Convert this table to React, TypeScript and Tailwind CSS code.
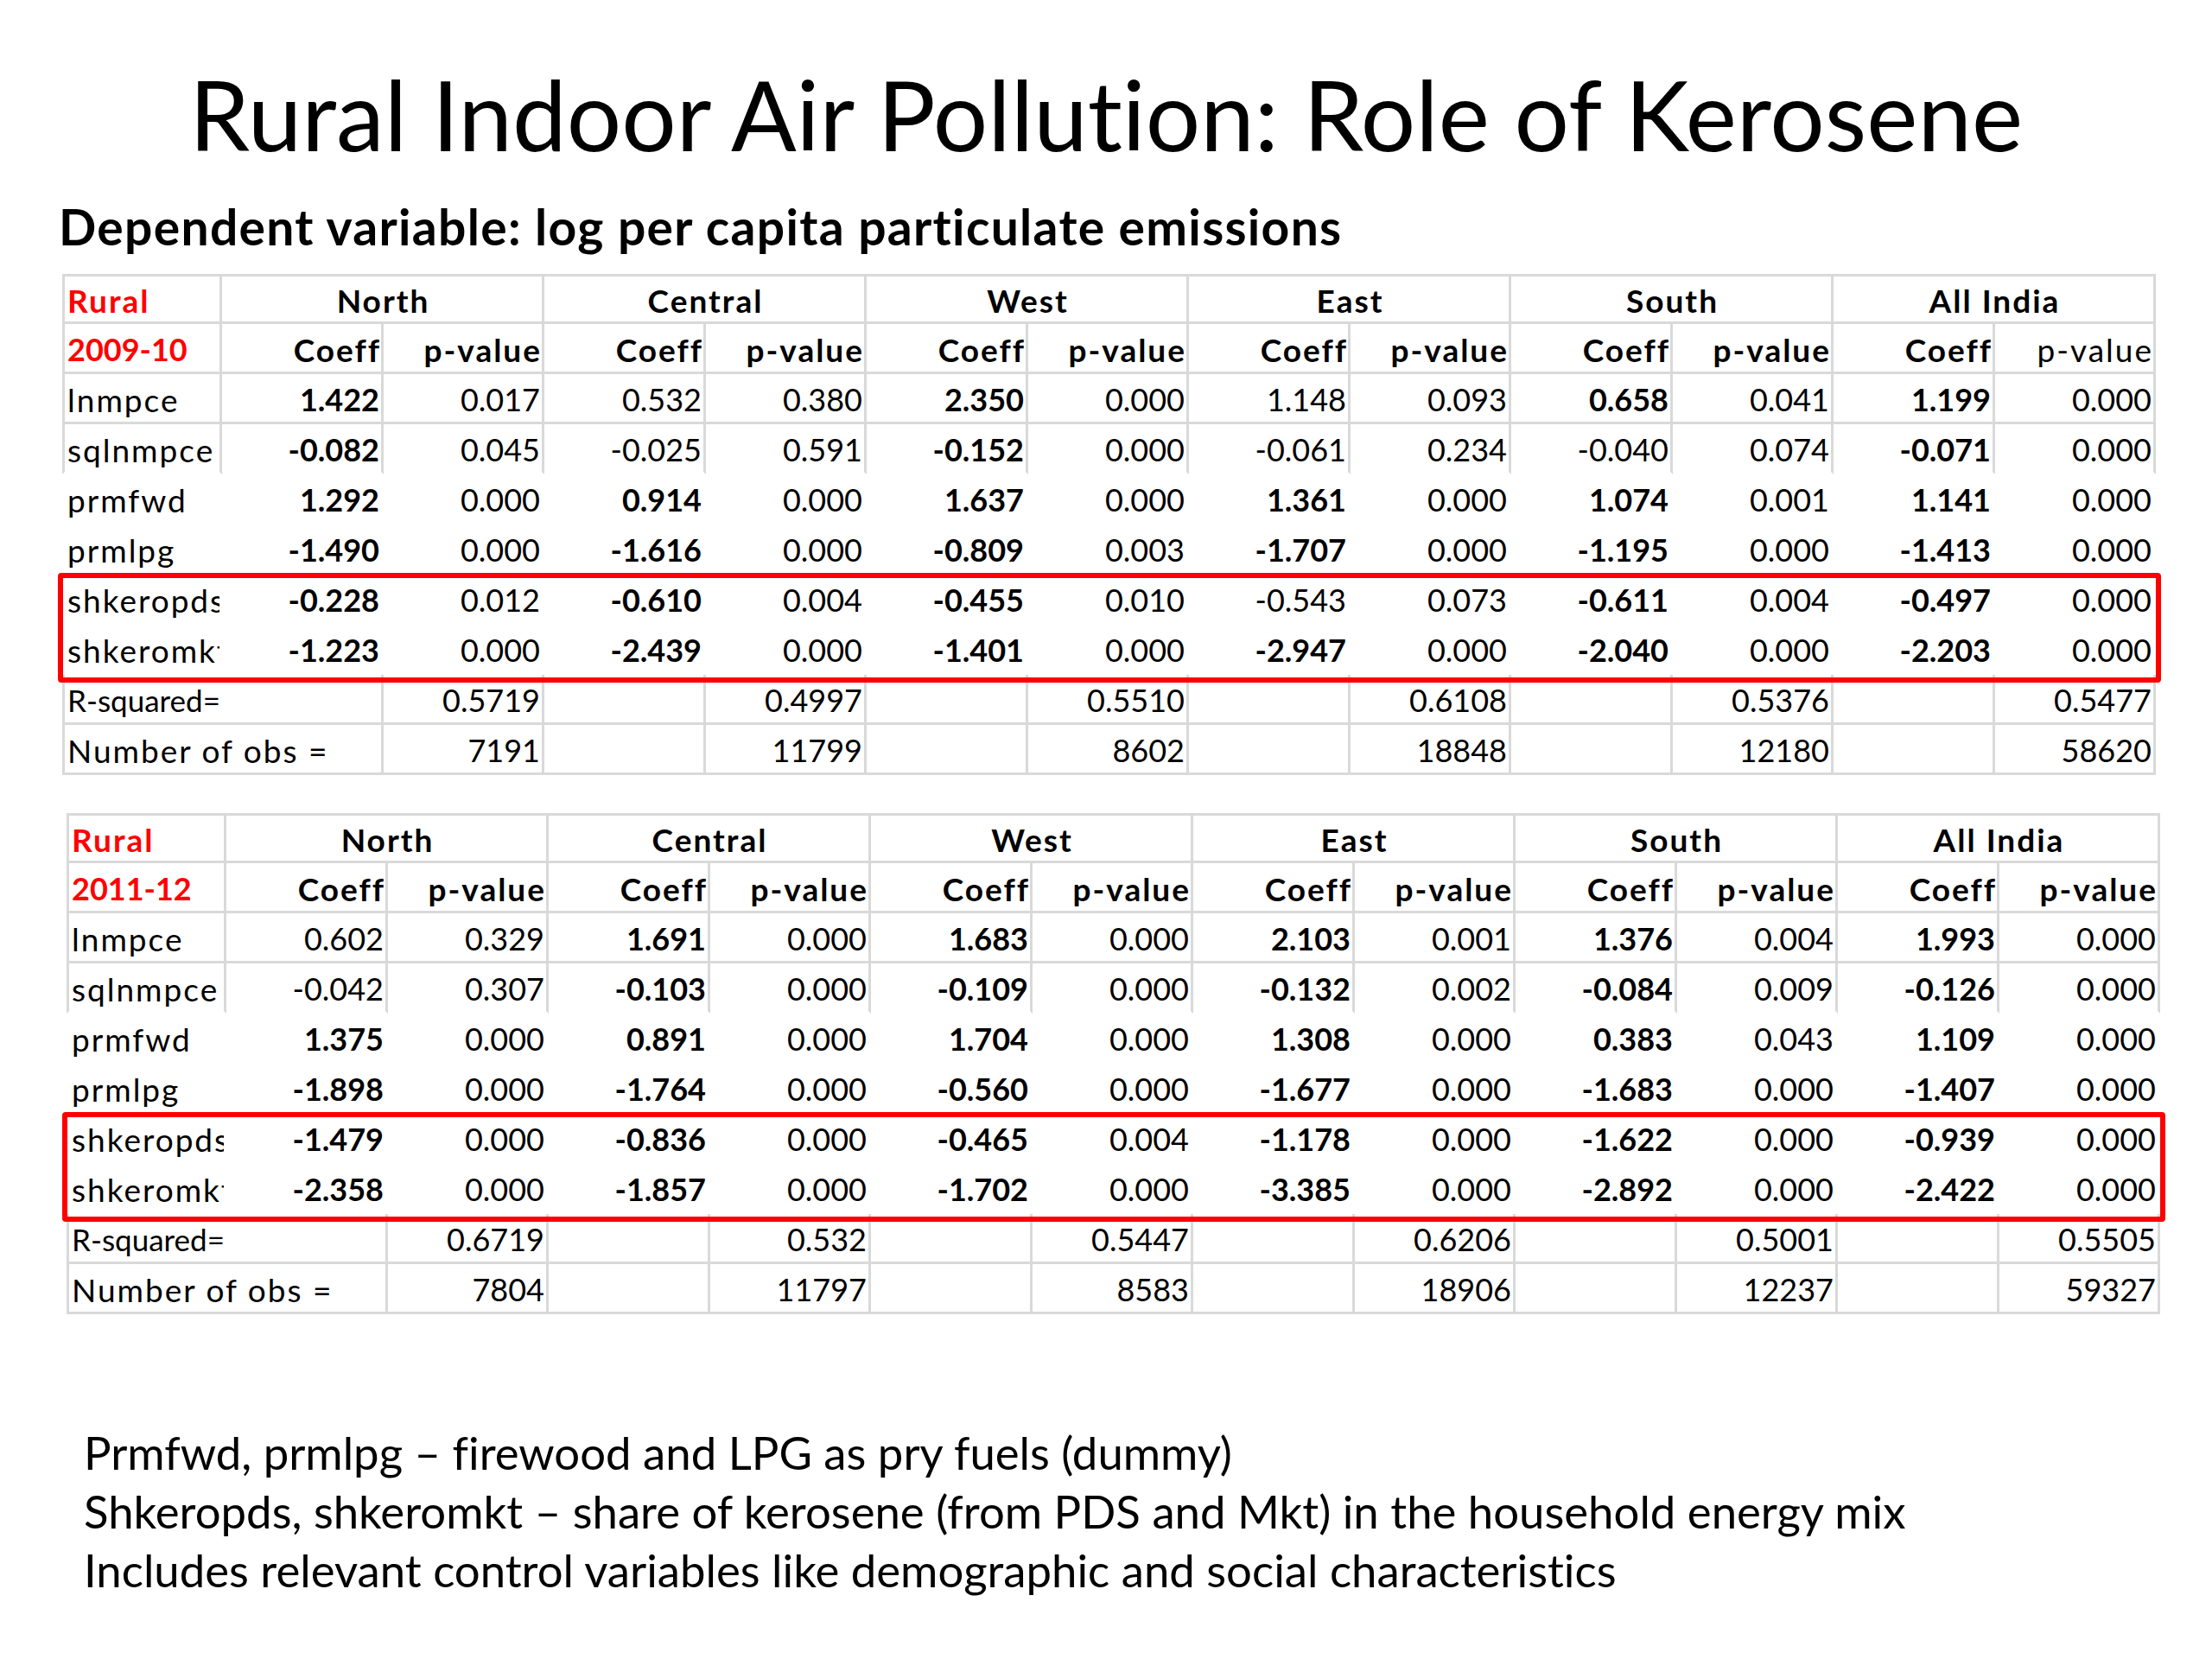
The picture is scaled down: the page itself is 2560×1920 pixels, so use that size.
import React from "react";

type RegionRow = { label: string; values: string[] };

type TableData = {
  year: string;
  rows: RegionRow[];
  rsq: string[];
  obs: string[];
  lastHeaderPlain?: boolean;
};

const regions = ["North", "Central", "West", "East", "South", "All India"];

// "*" prefix marks a bold (significant) coefficient
const table1: TableData = {
  year: "2009-10",
  lastHeaderPlain: true,
  rows: [
    { label: "lnmpce", values: ["*1.422", "0.017", "0.532", "0.380", "*2.350", "0.000", "1.148", "0.093", "*0.658", "0.041", "*1.199", "0.000"] },
    { label: "sqlnmpce", values: ["*-0.082", "0.045", "-0.025", "0.591", "*-0.152", "0.000", "-0.061", "0.234", "-0.040", "0.074", "*-0.071", "0.000"] },
    { label: "prmfwd", values: ["*1.292", "0.000", "*0.914", "0.000", "*1.637", "0.000", "*1.361", "0.000", "*1.074", "0.001", "*1.141", "0.000"] },
    { label: "prmlpg", values: ["*-1.490", "0.000", "*-1.616", "0.000", "*-0.809", "0.003", "*-1.707", "0.000", "*-1.195", "0.000", "*-1.413", "0.000"] },
    { label: "shkeropds", values: ["*-0.228", "0.012", "*-0.610", "0.004", "*-0.455", "0.010", "-0.543", "0.073", "*-0.611", "0.004", "*-0.497", "0.000"] },
    { label: "shkeromkt", values: ["*-1.223", "0.000", "*-2.439", "0.000", "*-1.401", "0.000", "*-2.947", "0.000", "*-2.040", "0.000", "*-2.203", "0.000"] },
  ],
  rsq: ["0.5719", "0.4997", "0.5510", "0.6108", "0.5376", "0.5477"],
  obs: ["7191", "11799", "8602", "18848", "12180", "58620"],
};

const table2: TableData = {
  year: "2011-12",
  rows: [
    { label: "lnmpce", values: ["0.602", "0.329", "*1.691", "0.000", "*1.683", "0.000", "*2.103", "0.001", "*1.376", "0.004", "*1.993", "0.000"] },
    { label: "sqlnmpce", values: ["-0.042", "0.307", "*-0.103", "0.000", "*-0.109", "0.000", "*-0.132", "0.002", "*-0.084", "0.009", "*-0.126", "0.000"] },
    { label: "prmfwd", values: ["*1.375", "0.000", "*0.891", "0.000", "*1.704", "0.000", "*1.308", "0.000", "*0.383", "0.043", "*1.109", "0.000"] },
    { label: "prmlpg", values: ["*-1.898", "0.000", "*-1.764", "0.000", "*-0.560", "0.000", "*-1.677", "0.000", "*-1.683", "0.000", "*-1.407", "0.000"] },
    { label: "shkeropds", values: ["*-1.479", "0.000", "*-0.836", "0.000", "*-0.465", "0.004", "*-1.178", "0.000", "*-1.622", "0.000", "*-0.939", "0.000"] },
    { label: "shkeromkt", values: ["*-2.358", "0.000", "*-1.857", "0.000", "*-1.702", "0.000", "*-3.385", "0.000", "*-2.892", "0.000", "*-2.422", "0.000"] },
  ],
  rsq: ["0.6719", "0.532", "0.5447", "0.6206", "0.5001", "0.5505"],
  obs: ["7804", "11797", "8583", "18906", "12237", "59327"],
};

const cellBase = "flex h-[58px] items-center overflow-hidden whitespace-nowrap pt-[3px] leading-none";
const word = "pl-[3px] pr-0 text-[37px] tracking-[2px]";
const num = "pl-[3px] pr-[2px] text-[36px]";
const lined = "border-r-[3px] border-b-[3px] border-[#d9d9d9]";
const bare = "border-r-[3px] border-b-[3px] border-transparent";

function RegressionTable({ data }: { data: TableData }) {
  return (
    <div className="relative w-fit">
      <div className="grid grid-cols-[185px_repeat(6,187px_186px)]">
        {/* region header */}
        <div className={`${cellBase} ${word} ${lined} border-t-[3px] border-l-[3px] font-bold text-[#ff0000]`}>Rural</div>
        {regions.map((r) => (
          <div key={r} className={`${cellBase} ${word} ${lined} col-span-2 justify-center border-t-[3px] font-bold`}>
            {r}
          </div>
        ))}

        {/* coeff / p-value header */}
        <div className={`${cellBase} ${num} ${lined} border-l-[3px] font-bold text-[#ff0000]`}>{data.year}</div>
        {regions.map((r, i) => (
          <React.Fragment key={r}>
            <div className={`${cellBase} ${word} ${lined} justify-end font-bold`}>Coeff</div>
            <div
              className={`${cellBase} ${word} ${lined} justify-end ${
                data.lastHeaderPlain && i === regions.length - 1 ? "font-normal" : "font-bold"
              }`}
            >
              p-value
            </div>
          </React.Fragment>
        ))}

        {data.rows.map((row, ri) => {
          // only the first two variable rows keep their grid lines
          const grid = ri < 2 ? lined : bare;
          const bottom = ri === 1 ? "border-b-transparent" : "";
          return (
            <React.Fragment key={row.label}>
              <div className={`${cellBase} ${word} ${grid} border-l-[3px] ${ri < 2 ? "" : "border-l-transparent"} ${bottom}`}>
                {row.label}
              </div>
              {row.values.map((v, vi) => {
                const bold = v.startsWith("*");
                return (
                  <div key={vi} className={`${cellBase} ${num} ${grid} ${bottom} justify-end ${bold ? "font-bold" : ""}`}>
                    {bold ? v.slice(1) : v}
                  </div>
                );
              })}
            </React.Fragment>
          );
        })}

        {/* summary rows */}
        <div className={`${cellBase} ${lined} col-span-2 border-l-[3px] pl-[3px] text-[35px]`}>R-squared=</div>
        {data.rsq.map((v, i) => (
          <React.Fragment key={i}>
            {i > 0 && <div className={`${cellBase} ${lined}`} />}
            <div className={`${cellBase} ${num} ${lined} justify-end`}>{v}</div>
          </React.Fragment>
        ))}
        <div className={`${cellBase} ${word} ${lined} col-span-2 border-l-[3px]`}>Number of obs =</div>
        {data.obs.map((v, i) => (
          <React.Fragment key={i}>
            {i > 0 && <div className={`${cellBase} ${lined}`} />}
            <div className={`${cellBase} ${num} ${lined} justify-end`}>{v}</div>
          </React.Fragment>
        ))}
      </div>

      {/* highlight around kerosene rows */}
      <div className="pointer-events-none absolute left-[-5px] top-[346px] h-[127px] w-[2434px] rounded-[4px] border-[6px] border-[#ff0000]" />
    </div>
  );
}

export default function App() {
  return (
    <div className="flex h-[1920px] w-[2560px] flex-col bg-white font-['Lato','Open_Sans',sans-serif] text-black [font-variant-ligatures:no-common-ligatures]">
      <h1 className="pt-[76px] text-center text-[112px] font-normal leading-none">
        Rural Indoor Air Pollution: Role of Kerosene
      </h1>
      <h2 className="ml-[68px] mt-[46px] text-[57px] font-bold leading-none tracking-[1.3px]">
        Dependent variable: log per capita particulate emissions
      </h2>

      <div className="ml-[72px] mt-[26px]">
        <RegressionTable data={table1} />
      </div>
      <div className="ml-[77px] mt-[44px]">
        <RegressionTable data={table2} />
      </div>

      <div className="ml-[97px] mt-[126px] text-[52.7px] leading-[68px]">
        <p>Prmfwd, prmlpg – firewood and LPG as pry fuels (dummy)</p>
        <p>Shkeropds, shkeromkt – share of kerosene (from PDS and Mkt) in the household energy mix</p>
        <p>Includes relevant control variables like demographic and social characteristics</p>
      </div>
    </div>
  );
}
